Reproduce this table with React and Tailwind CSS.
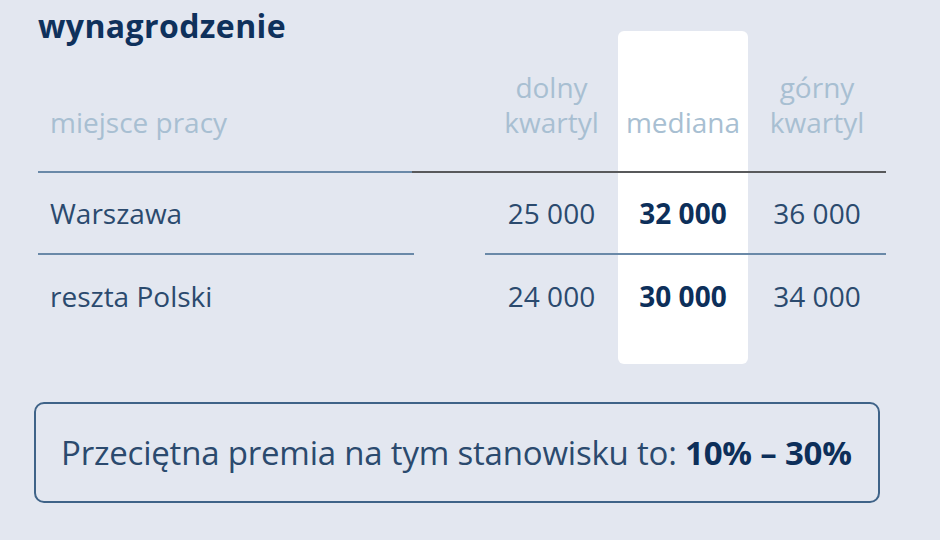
const rows = [
  { place: 'Warszawa', low: '25 000', median: '32 000', high: '36 000', line: true },
  { place: 'reszta Polski', low: '24 000', median: '30 000', high: '34 000', line: false },
]

export default function App() {
  return (
    <div
      className="w-[940px] h-[540px] bg-[#e3e7f0] pl-[38px] pt-[7px] overflow-hidden"
      style={{ fontFamily: '"Open Sans", "Noto Sans", sans-serif' }}
    >
      <h1 className="text-[32px] leading-[38px] font-bold text-[#0f315c] tracking-[0.4px]">wynagrodzenie</h1>

      <div className="w-[848px] -mt-[14px]">
        {/* header */}
        <div className="flex text-[28px] leading-[35px] text-[#a8bfd2]">
          <div className="w-[374px] border-b-2 border-[#6a89a8] pl-[12px] pb-[31px] pt-[74px] flex items-end">
            miejsce pracy
          </div>
          <div className="w-[73px] border-b-2 border-[#58595b]" />
          <div className="w-[133px] border-b-2 border-[#58595b] flex items-end justify-center text-center pb-[31px]">
            dolny<br />kwartyl
          </div>
          <div className="w-[130px] border-b-2 border-[#58595b] bg-white rounded-t-[6px] flex items-end justify-center pb-[31px]">
            mediana
          </div>
          <div className="w-[138px] border-b-2 border-[#58595b] flex items-end justify-center text-center pb-[31px]">
            górny<br />kwartyl
          </div>
        </div>

        {rows.map((r) => (
          <div key={r.place} className="flex h-[82px] text-[28px] text-[#2b4a6e]">
            <div className={`w-[376px] pl-[12px] flex items-center ${r.line ? 'border-b-2 border-[#6a89a8]' : ''}`}>
              {r.place}
            </div>
            <div className="w-[71px]" />
            <div className={`w-[133px] flex items-center justify-center ${r.line ? 'border-b-2 border-[#6a89a8]' : ''}`}>
              {r.low}
            </div>
            <div className={`w-[130px] bg-white flex items-center justify-center font-bold text-[#0d2f5a] ${r.line ? 'border-b-2 border-[#6a89a8]' : ''}`}>
              {r.median}
            </div>
            <div className={`w-[138px] flex items-center justify-center ${r.line ? 'border-b-2 border-[#6a89a8]' : ''}`}>
              {r.high}
            </div>
          </div>
        ))}

        <div className="flex h-[27px]">
          <div className="w-[580px]" />
          <div className="w-[130px] bg-white rounded-b-[6px]" />
        </div>
      </div>

      <div className="w-[846px] h-[101px] -ml-[4px] mt-[38px] border-2 border-[#3f6388] rounded-[10px] flex items-center pl-[25px]">
        <p className="text-[33px] text-[#2b4a6e] tracking-[-0.2px]">
          Przeciętna premia na tym stanowisku to: <span className="font-bold text-[#0d2f5a]">10% – 30%</span>
        </p>
      </div>
    </div>
  )
}
